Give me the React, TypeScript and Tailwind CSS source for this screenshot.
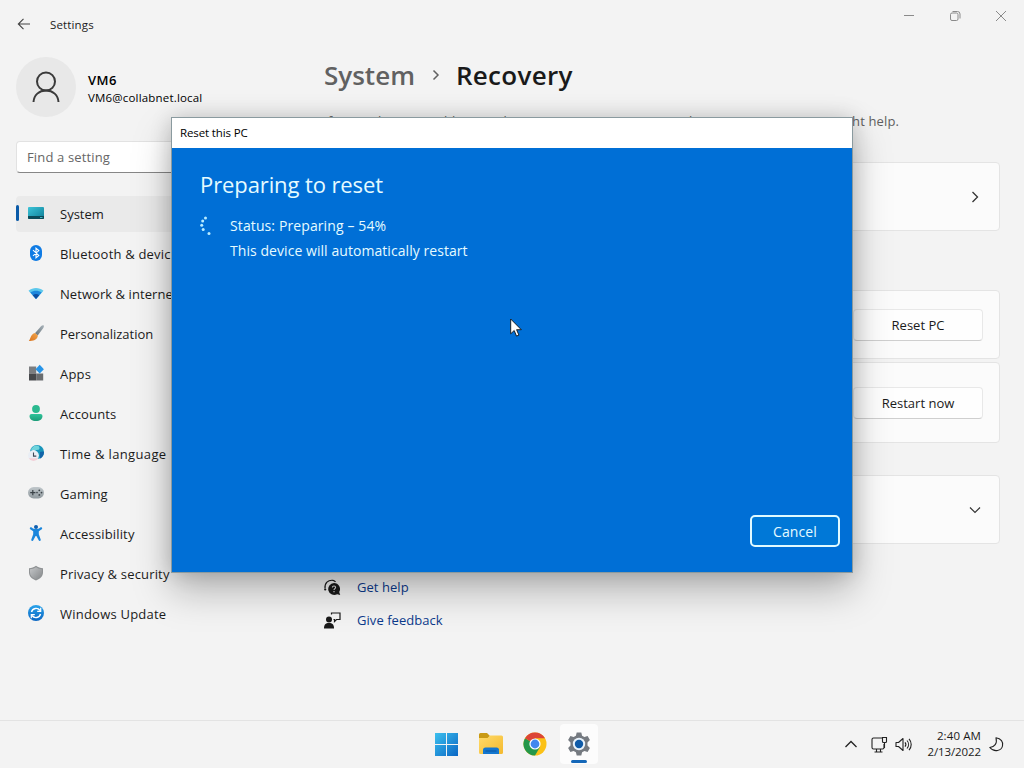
import type { ReactNode } from "react";

interface NavItem {
  label: string;
  icon: ReactNode;
  tracking?: string;
}

const NAV_ITEMS: NavItem[] = [
  {
    label: "System",
    icon: (
      <>
        <rect x="0" y="2" width="16" height="12" rx="1" fill="url(#sys)" />
        <path d="M0 11h16v2a1 1 0 0 1-1 1H1a1 1 0 0 1-1-1z" fill="#0b4a58" />
        <path d="M12 12.5h2.500" stroke="#3fb6c4" strokeWidth="1" />
      </>
    ),
  },
  {
    label: "Bluetooth & devices",
    tracking: "tracking-[0.2px]",
    icon: (
      <>
        <rect x="2" y="0" width="12" height="16" rx="6" fill="#0f7be4" />
        <path d="M5 5.200l5.800 5.200L8 12.800V3.200l2.800 2.400L5 10.800" fill="none" stroke="#fff" strokeWidth="1.1" />
      </>
    ),
  },
  {
    label: "Network & internet",
    tracking: "tracking-[0.06px]",
    icon: (
      <>
        <path d="M.5 5.700C5 2 11 2 15.500 5.700L8 14z" fill="#5cc8ec" />
        <path d="M2.300 7.600C6 5 10 5 13.700 7.600L8 14z" fill="#1d87dc" />
        <path d="M4.700 10.200C7 8.600 9 8.600 11.300 10.200L8 14z" fill="#0c4ea2" />
      </>
    ),
  },
  {
    label: "Personalization",
    icon: (
      <>
        <path d="M15.500.3c.8.700.3 2-.4 3L9.700 10.500 6.900 8.200 13 1.300C13.800.5 14.800-.1 15.500.3z" fill="url(#handle)" />
        <path d="M7 8.100l2.900 2.500c-.3 3-2.900 5.700-9.100 5.300C2.600 14.700 2.500 9 7 8.100z" fill="url(#bristle)" />
      </>
    ),
  },
  {
    label: "Apps",
    tracking: "tracking-[0.2px]",
    icon: (
      <>
        <path d="M1 1.500h7.200V8.500H1z" fill="#7b7d80" />
        <path d="M1 8.500h7.200v7H1z" fill="#47494c" />
        <path d="M8.200 8.500h7v7h-7z" fill="#6a6d70" />
        <path d="M11.700-.2l4.200 4.400-4.200 4.400-4.200-4.400z" fill="#2694e8" />
      </>
    ),
  },
  {
    label: "Accounts",
    tracking: "tracking-[0.15px]",
    icon: (
      <>
        <circle cx="8" cy="4" r="3.900" fill="#2bb98f" />
        <path d="M1.500 11a2 2 0 0 1 2-2h9a2 2 0 0 1 2 2c0 3-2.500 5-6.500 5s-6.500-2-6.500-5z" fill="url(#acct)" />
      </>
    ),
  },
  {
    label: "Time & language",
    tracking: "tracking-[0.36px]",
    icon: (
      <>
        <circle cx="9" cy="7" r="7" fill="#1895ba" />
        <path d="M6 1c3-1.500 6 0 5.500 2.500S7 4 7 6 3 5 3 4z" fill="#6fd4dc" />
        <path d="M12 7c2-1 4-.5 4 0 0 3-2 6-4 6.500z" fill="#1264a8" />
        <circle cx="5.500" cy="10.500" r="5.400" fill="#e9eef5" />
        <path d="M.8 13.200a5.400 5.400 0 0 0 9.400 0z" fill="#f3cfd6" />
        <path d="M5.500 7.500v3.600h2.800" fill="none" stroke="#3c4654" strokeWidth="1.100" />
      </>
    ),
  },
  {
    label: "Gaming",
    tracking: "tracking-[0.1px]",
    icon: (
      <>
        <rect x="0" y="2" width="16" height="11.500" rx="5.700" fill="url(#pad)" />
        <path d="M4.800 5v5.200M2.200 7.600h5.200" stroke="#3b4247" strokeWidth="1.200" />
        <g fill="#3b4247">
          <circle cx="11.300" cy="5.300" r=".9" />
          <circle cx="11.300" cy="9.900" r=".9" />
          <circle cx="9" cy="7.600" r=".8" />
          <circle cx="13.500" cy="7.600" r=".9" />
        </g>
      </>
    ),
  },
  {
    label: "Accessibility",
    tracking: "tracking-[0.15px]",
    icon: (
      <>
        <circle cx="8" cy="2" r="2" fill="#0f5fb0" />
        <path
          d="M2 2.800c.5-.6 1.200-.5 1.700-.2C6 4.600 10 4.600 12.300 2.600c.5-.3 1.200-.4 1.700.2.500.700 0 1.500-.6 1.800L10.800 6.200v3l1.900 5.400c.2.700-.2 1.300-.8 1.400-.6.100-1-.2-1.200-.7L8.400 11h-.8l-2.300 4.300c-.2.500-.6.800-1.200.7-.6-.1-1-.7-.8-1.400l1.900-5.400v-3L2.600 4.600C2 4.300 1.500 3.500 2 2.800z"
          fill="#1a86dc"
        />
      </>
    ),
  },
  {
    label: "Privacy & security",
    tracking: "tracking-[0.17px]",
    icon: (
      <>
        <path d="M8 .8c2 1.700 4.500 2.300 7 2.400v4.300c0 3.700-2.700 6.300-7 8-4.300-1.700-7-4.300-7-8V3.200C3.500 3.100 6 2.500 8 .8z" fill="#8f9294" />
        <path d="M8 2.200c1.700 1.300 3.900 1.900 6 2v3.300c0 3.100-2.300 5.400-6 6.900-3.700-1.500-6-3.800-6-6.900V4.200c2.100-.1 4.300-.7 6-2z" fill="url(#shield)" />
      </>
    ),
  },
  {
    label: "Windows Update",
    tracking: "tracking-[0.22px]",
    icon: (
      <>
        <circle cx="8" cy="8" r="8" fill="url(#upd)" />
        <path d="M3.500 7A4.700 4.700 0 0 1 12 5.500M12.500 9A4.700 4.700 0 0 1 4 10.500" fill="none" stroke="#fff" strokeWidth="1.400" />
        <path d="M12.700 2.800v3.500H9.200M3.300 13.200V9.700h3.500" fill="none" stroke="#fff" strokeWidth="1.200" />
      </>
    ),
  },
];

function Gradients() {
  return (
    <svg width="0" height="0" className="absolute">
      <defs>
        <linearGradient id="sys" x1="0" y1="0" x2="1" y2="1">
          <stop offset="0" stopColor="#3cc4d8" />
          <stop offset="1" stopColor="#0d7d96" />
        </linearGradient>
        <linearGradient id="handle" x1="1" y1="0" x2="0" y2="1">
          <stop offset="0" stopColor="#a9b4bb" />
          <stop offset="1" stopColor="#66727a" />
        </linearGradient>
        <linearGradient id="bristle" x1="1" y1="0" x2="0" y2="1">
          <stop offset="0" stopColor="#f3a64c" />
          <stop offset="1" stopColor="#d9741f" />
        </linearGradient>
        <linearGradient id="acct" x1="0" y1="0" x2="0" y2="1">
          <stop offset="0" stopColor="#2fc39a" />
          <stop offset="1" stopColor="#1c9c78" />
        </linearGradient>
        <linearGradient id="pad" x1="0" y1="0" x2="0" y2="1">
          <stop offset="0" stopColor="#c0c7cb" />
          <stop offset="1" stopColor="#90999e" />
        </linearGradient>
        <linearGradient id="shield" x1="0" y1="0" x2="1" y2="1">
          <stop offset="0" stopColor="#c4c6c8" />
          <stop offset="1" stopColor="#85888a" />
        </linearGradient>
        <linearGradient id="upd" x1="0" y1="0" x2="0" y2="1">
          <stop offset="0" stopColor="#2aa3ea" />
          <stop offset="1" stopColor="#0c66c2" />
        </linearGradient>
        <linearGradient id="win" x1="0" y1="0" x2="1" y2="1">
          <stop offset="0" stopColor="#3cc0ee" />
          <stop offset="1" stopColor="#0a66c4" />
        </linearGradient>
        <linearGradient id="folder" x1="0" y1="0" x2="1" y2="1">
          <stop offset="0" stopColor="#ffdb6a" />
          <stop offset="1" stopColor="#f4b92e" />
        </linearGradient>
      </defs>
    </svg>
  );
}

function TitleBar() {
  return (
    <header className="flex h-12 items-start justify-between">
      <div className="flex h-12 items-center pl-[17px]">
        <svg width="14" height="14" viewBox="0 0 14 14" fill="none" stroke="#444" strokeWidth="1.100">
          <path d="M13 7H1.500M6.500 1.800L1.300 7l5.200 5.200" />
        </svg>
        <span className="ml-[19px] pt-0.5 text-[11.500px] tracking-[0.15px]">Settings</span>
      </div>
      <div className="flex h-8 items-center gap-[34px] pr-[17px]">
        <svg width="12" height="12" viewBox="0 0 12 12" stroke="#8a8a8a">
          <path d="M1 5.500h10" />
        </svg>
        <svg width="12" height="12" viewBox="0 0 12 12" fill="none" stroke="#8a8a8a">
          <rect x="1.500" y="3" width="7.500" height="7.500" rx="1.500" />
          <path d="M3.500 1.500h5a2.500 2.500 0 0 1 2.500 2.500v4.500" />
        </svg>
        <svg width="12" height="12" viewBox="0 0 12 12" stroke="#8a8a8a">
          <path d="M1 1l10 10M11 1L1 11" />
        </svg>
      </div>
    </header>
  );
}

function Sidebar() {
  return (
    <aside className="w-[292px] pt-[9px] pl-4">
      <div className="flex items-center">
        <div className="flex h-[60px] w-[60px] items-center justify-center rounded-full bg-[#e8e8e8]">
          <svg width="28" height="32" viewBox="0 0 28 32" fill="none" stroke="#3a3a3a" strokeWidth="2">
            <circle cx="14" cy="10.500" r="9" />
            <path d="M1.500 31C2 24 7 19.500 14 19.500S26 24 26.500 31" />
          </svg>
        </div>
        <div className="ml-3 pt-[3px]">
          <div className="text-[13px] leading-[17px] font-semibold tracking-[0.4px] text-black">VM6</div>
          <div className="text-[11.500px] leading-[17px] tracking-[0.18px] text-black">VM6@collabnet.local</div>
        </div>
      </div>

      <div className="mt-6 h-8 rounded border border-[#e2e2e2] border-b-[#868686] bg-white px-[10px] text-[13px] leading-[31px] tracking-[0.15px] text-[#666]">
        Find a setting
      </div>

      <nav className="mt-[23px] flex flex-col gap-1">
        {NAV_ITEMS.map((item, i) => (
          <div
            key={item.label}
            className={`flex h-9 items-center rounded ${i === 0 ? "bg-[#eaeaea]" : ""}`}
          >
            <div className={`mb-0.5 h-4 w-[3px] rounded-full ${i === 0 ? "bg-[#0a5aa8]" : ""}`} />
            <svg width="16" height="16" viewBox="0 0 16 16" className="mb-0.5 ml-[9px] overflow-visible">
              {item.icon}
            </svg>
            <span className={`ml-4 pt-0.5 text-[13px] whitespace-nowrap ${item.tracking ?? ""}`}>
              {item.label}
            </span>
          </div>
        ))}
      </nav>
    </aside>
  );
}

function Card({ className, children }: { className: string; children: ReactNode }) {
  return (
    <div className={`flex items-center justify-end rounded border border-[#e4e4e4] bg-[#fbfbfb] pr-4 ${className}`}>
      {children}
    </div>
  );
}

function CardButton({ children }: { children: ReactNode }) {
  return (
    <button className="h-8 w-[130px] rounded border border-[#e8e8e8] border-b-[#cfcfcf] bg-[#fefefe] pt-0.5 text-[13px]">
      {children}
    </button>
  );
}

function Content() {
  return (
    <main className="w-[676px] pt-[7px]">
      <h1 className="flex h-10 items-center text-[26px] font-semibold">
        <span className="text-[#616161]">System</span>
        <svg width="8" height="12" viewBox="0 0 8 12" fill="none" stroke="#616161" strokeWidth="1.500" className="mr-4 ml-[17px]">
          <path d="M1.500 1.500L6 6l-4.500 4.500" />
        </svg>
        <span className="tracking-[0.3px] text-[#1a1a1a]">Recovery</span>
      </h1>
      <p className="mt-4 h-5 text-[13px] leading-5 tracking-[0.15px] whitespace-nowrap text-[#5f5f5f]">
        If you&apos;re having problems with your PC or want to reset it, these recovery options might help.
      </p>

      <Card className="mt-[31px] h-[69px]">
        <svg width="16" height="16" viewBox="0 0 16 16" fill="none" stroke="#333" strokeWidth="1.300">
          <path d="M5.500 3l5 5-5 5" />
        </svg>
      </Card>
      <Card className="mt-[59px] h-[69px]">
        <CardButton>Reset PC</CardButton>
      </Card>
      <Card className="mt-[3px] h-[81px]">
        <CardButton>Restart now</CardButton>
      </Card>
      <Card className="mt-8 h-[69px]">
        <svg width="16" height="16" viewBox="0 0 16 16" fill="none" stroke="#333" strokeWidth="1.200">
          <path d="M3 5.500l5 5 5-5" />
        </svg>
      </Card>

      <div className="mt-[27px] flex flex-col text-[13px] tracking-[0.05px] text-[#0b3a8c]">
        <a className="flex h-[33px] items-center gap-4">
          <svg width="17" height="17" viewBox="0 0 17 17">
            <path d="M1 9.500C.5 4 4 .8 9 1.300c1.500.2 2 .8 2.500 1.800" fill="none" stroke="#1a1a1a" strokeWidth="1.200" />
            <circle cx="1.200" cy="10.500" r="1.100" fill="#1a1a1a" />
            <path d="M10 4a6 6 0 0 1 5.200 9l1 3-3-.8A6 6 0 1 1 10 4z" fill="#1a1a1a" />
            <path d="M8.400 8.500c0-2 3.200-2 3.200 0 0 1.200-1.600 1.200-1.600 2.600m0 1v1.200" fill="none" stroke="#ddd" strokeWidth="1.100" />
          </svg>
          Get help
        </a>
        <a className="flex h-[33px] items-center gap-4">
          <svg width="17" height="17" viewBox="0 0 17 17">
            <circle cx="5" cy="7.500" r="3" fill="#1a1a1a" />
            <path d="M0 16.500c0-4 1.500-5.500 5-5.500s5 1.500 5 5.500z" fill="#1a1a1a" />
            <path d="M7.500 2.500V1H16v6.500h-3.500L10.500 9.500V7.500H9.500" fill="none" stroke="#1a1a1a" strokeWidth="1.200" />
          </svg>
          Give feedback
        </a>
      </div>
    </main>
  );
}

function ResetDialog() {
  return (
    <section className="absolute top-[117px] left-[171px] flex h-[456px] w-[682px] flex-col border border-[#8a9a9f] bg-[#006fd6] shadow-[0_18px_36px_rgba(0,0,0,0.26),0_0_20px_rgba(0,0,0,0.16)]">
      <div className="h-[30px] bg-white pl-2 text-[11.500px] leading-[30px] text-black">
        <span className="tracking-[-0.12px]">Reset this PC</span>
      </div>
      <div className="flex-1 pt-[18px] pl-7 text-[#e6fbff]">
        <h2 className="text-[22px] leading-9 tracking-[-0.1px]">Preparing to reset</h2>
        <div className="mt-[11px] flex">
          <svg width="14" height="24" viewBox="0 0 14 24" fill="#b9ecff">
            <circle cx="5.500" cy="5" r="1.500" />
            <circle cx="2.700" cy="8" r="1.500" />
            <circle cx="1.700" cy="12.200" r="1.500" />
            <circle cx="3.200" cy="16.500" r="1.500" />
            <circle cx="9" cy="20.500" r="1.500" />
          </svg>
          <div className="ml-4 text-[14px] leading-[25px]">
            <p className="tracking-[0.11px]">Status: Preparing – 54%</p>
            <p className="tracking-[0.06px]">This device will automatically restart</p>
          </div>
        </div>
      </div>
      <div className="flex justify-end pr-3 pb-[25px]">
        <button className="h-8 w-[90px] rounded-[5px] border-2 border-[#e0faff] bg-[#0078d7] text-[14px] tracking-[0.1px] text-[#e6fbff]">
          Cancel
        </button>
      </div>
    </section>
  );
}

function Taskbar() {
  return (
    <footer className="flex h-12 items-center justify-between border-t border-[#e3e3e3] bg-[#f3f3f3] pr-5 pb-px pl-[434px]">
      <div className="flex items-center">
        <svg width="24" height="24" viewBox="0 0 24 24" fill="url(#win)">
          <path d="M1 1h11v11H1zM13 1h11v11H13zM1 13h11v11H1zM13 13h11v11H13z" />
        </svg>
        <svg width="24" height="24" viewBox="0 0 24 24" className="ml-[21px]">
          <path d="M0 2.500A1.500 1.500 0 0 1 1.500 1H8l3 3-2 3H0z" fill="#c99a14" />
          <path d="M0 6h8.500L11 3.500h11.500A1.500 1.500 0 0 1 24 5v15.500a1.500 1.500 0 0 1-1.500 1.500h-21A1.500 1.500 0 0 1 0 20.500z" fill="url(#folder)" />
          <path d="M4 22v-4a2.500 2.500 0 0 1 2.500-2.500h11A2.500 2.500 0 0 1 20 18v4z" fill="#1477cf" />
          <path d="M6.500 19h11" stroke="#0d5ca8" strokeWidth="1.200" />
        </svg>
        <svg width="24" height="24" viewBox="0 0 24 24" className="ml-5">
          <circle cx="12" cy="12" r="11.500" fill="#fbc116" />
          <path d="M12 12L2.040 6.250A11.500 11.500 0 0 0 12 23.500l5-8.600z" fill="#23974a" />
          <path d="M12 12L2.040 6.250A11.500 11.500 0 0 1 21.960 6.250H12z" fill="#dc4437" />
          <circle cx="12" cy="12" r="5.600" fill="#fff" />
          <circle cx="12" cy="12" r="4.400" fill="#4286ee" />
        </svg>
        <div className="ml-[13px] flex h-10 w-[38px] flex-col items-center justify-between rounded bg-[#fcfcfc] pt-2 pb-px">
          <svg width="24" height="24" viewBox="0 0 24 24">
            <path
              d="M9.700.5h4.600l.8 3.200 2.300 1.300 3.200-.9 2.300 4-2.400 2.300v3.200l2.400 2.300-2.300 4-3.200-.9-2.300 1.300-.8 3.200H9.700l-.8-3.200L6.600 19l-3.200.9-2.300-4 2.400-2.300v-3.200L1.100 8.100l2.300-4 3.200.9 2.300-1.300z"
              fill="#757a80"
            />
            <circle cx="12" cy="12" r="6.200" fill="#e9f3fb" />
            <circle cx="12" cy="12" r="4.200" fill="#0f5ba8" />
          </svg>
          <div className="h-[3px] w-4 rounded-full bg-[#1467b8]" />
        </div>
      </div>

      <div className="flex items-center text-[11.500px]">
        <svg width="14" height="14" viewBox="0 0 14 14" fill="none" stroke="#222" strokeWidth="1.300">
          <path d="M1.500 10L7 4.500l5.500 5.500" />
        </svg>
        <svg width="17" height="17" viewBox="0 0 17 17" fill="none" stroke="#222" strokeWidth="1.100" className="ml-[13px]">
          <path d="M11 2H2.500A1.500 1.500 0 0 0 1 3.500v8A1.500 1.500 0 0 0 2.500 13h9a1.500 1.500 0 0 0 1.500-1.500V8M5.500 13v3M9.500 13v3M3.500 16h8" />
          <path d="M11.500 1.500h4v4a1 1 0 0 1-1 1h-2a1 1 0 0 1-1-1zM13.500 6.500V12" />
        </svg>
        <svg width="17" height="17" viewBox="0 0 17 17" fill="none" stroke="#222" strokeWidth="1.100" className="ml-[7px]">
          <path d="M1 6.500h2.500L8 2.500v12l-4.500-4H1z" strokeLinejoin="round" />
          <path d="M10 6.300a3.500 3.500 0 0 1 0 4.400M12 4.500a6 6 0 0 1 0 8M14 2.800a8.500 8.500 0 0 1 0 11.400" />
        </svg>
        <div className="ml-[15px] text-right leading-4">
          <div className="tracking-[0.1px]">2:40 AM</div>
          <div className="tracking-[-0.1px]">2/13/2022</div>
        </div>
        <svg width="15" height="15" viewBox="0 0 15 15" fill="none" stroke="#222" strokeWidth="1.100" className="ml-2">
          <path d="M7 .800C12 1.500 14.500 5 13.500 9c-1 4.500-8 7-12.700 1.500C5.500 9.500 8.500 7 7 .800z" strokeLinejoin="round" />
        </svg>
      </div>
    </footer>
  );
}

export default function App() {
  return (
    <div className="relative flex h-[768px] w-[1024px] flex-col overflow-hidden bg-[#f3f3f3] font-['Open_Sans',sans-serif] text-[#1b1b1b]">
      <Gradients />
      <TitleBar />
      <div className="flex flex-1 gap-8">
        <Sidebar />
        <Content />
      </div>
      <Taskbar />
      <ResetDialog />
      <svg width="14" height="20" viewBox="0 0 14 20" className="absolute top-[318px] left-[510px]">
        <path d="M.7 1v14.800l3.500-3.300 2.300 5.600 2.400-1-2.300-5.400h4.700z" fill="#fff" stroke="#111" strokeWidth=".9" />
      </svg>
    </div>
  );
}
